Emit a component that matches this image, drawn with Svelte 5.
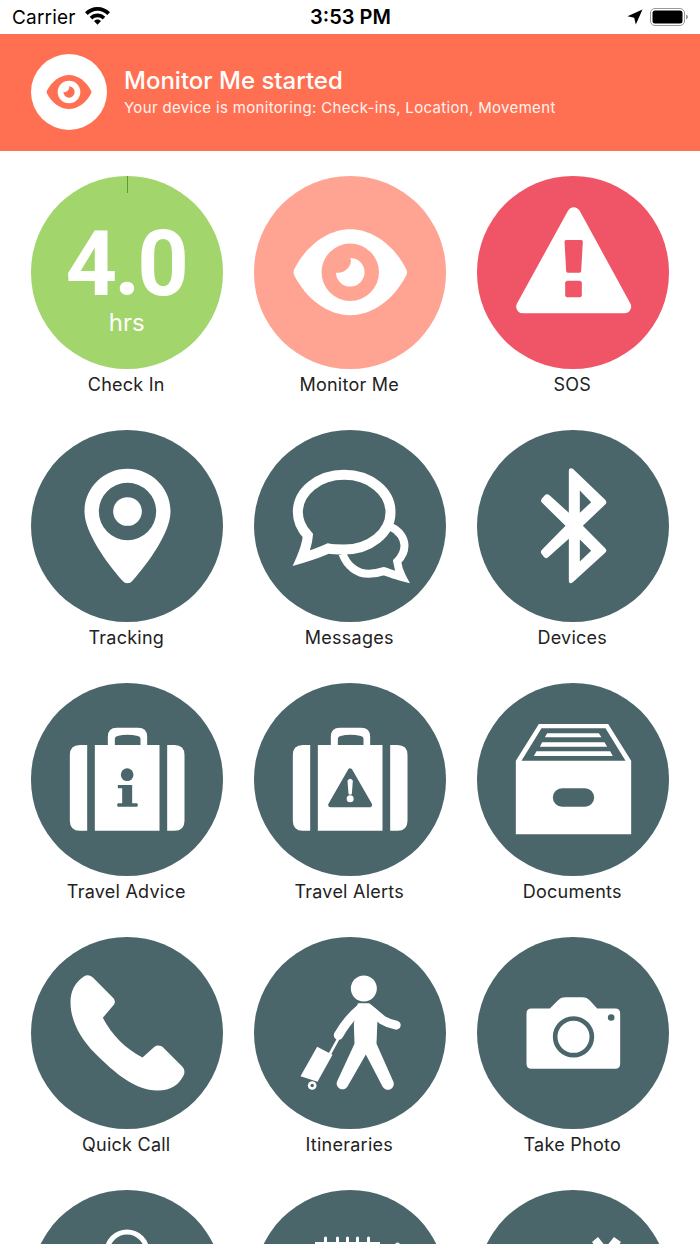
<script>
    const items = [
        { label: 'Check In', tone: 'green', hours: '4.0' },
        { label: 'Monitor Me', tone: 'coral', icon: eyeIcon },
        { label: 'SOS', tone: 'red', icon: sosIcon },
        { label: 'Tracking', tone: 'slate', icon: pinIcon },
        { label: 'Messages', tone: 'slate', icon: messagesIcon },
        { label: 'Devices', tone: 'slate', icon: bluetoothIcon },
        { label: 'Travel Advice', tone: 'slate', icon: adviceIcon },
        { label: 'Travel Alerts', tone: 'slate', icon: alertsIcon },
        { label: 'Documents', tone: 'slate', icon: documentsIcon },
        { label: 'Quick Call', tone: 'slate', icon: phoneIcon },
        { label: 'Itineraries', tone: 'slate', icon: walkerIcon },
        { label: 'Take Photo', tone: 'slate', icon: cameraIcon },
        // last row runs off the bottom of the screen, labels never show
        { tone: 'slate', icon: ringIcon },
        { tone: 'slate', icon: calendarIcon },
        { tone: 'slate', icon: toolsIcon }
    ];
</script>

{#snippet eyeIcon(shape = '#fff', ring = 'currentColor')}
    <svg class="glyph" viewBox="-96.25 -96.25 192.5 192.5">
        <path fill={shape} d="M-56 -3C-44 -27 -22 -43 0 -43C22 -43 44 -27 56 -3Q57.5 0 56 3C44 27 22 43 0 43C-22 43 -44 27 -56 3Q-57.5 0 -56 -3Z" />
        <circle r="28.7" fill={ring} />
        <path fill={shape} d="M-14.3 0.5A14.3 14.3 0 1 0 0 -14.3C2 -10 -1 -5 -3 -3.5C-5 -1 -10 1 -14.3 0.5Z" />
    </svg>
{/snippet}

{#snippet sosIcon()}
    <svg class="glyph" viewBox="49.5 33 577.5 577.5">
        <path fill="#fff" stroke="#fff" stroke-width="40" stroke-linejoin="round" d="M340 147L492 425H187Z" />
        <path fill="currentColor" d="M317 225H362Q367 225 367 230L362 318Q362 323 357 323H322Q317 323 317 318L312 230Q312 225 317 225Z" />
        <rect x="314" y="347" width="50" height="50" rx="8" fill="currentColor" />
    </svg>
{/snippet}

{#snippet pinIcon()}
    <svg class="glyph" viewBox="31.5 13.5 577.5 577.5">
        <path fill="#fff" fill-rule="evenodd" d="M321 130C392 130 450 187 450 258C450 320 385 410 336 466C328 476 314 476 306 466C257 410 192 320 192 258C192 187 250 130 321 130ZM321 172A86 86 0 1 0 321 344A86 86 0 1 0 321 172Z" />
        <circle cx="321" cy="258" r="43" fill="#fff" />
    </svg>
{/snippet}

{#snippet messagesIcon()}
    <svg class="glyph" viewBox="700.5 13.5 577.5 577.5">
        <path fill="none" stroke="#fff" stroke-width="24" stroke-miterlimit="6" d="M1112 305C1138 316 1152 340 1152 360C1152 378 1143 395 1130 408C1132 425 1137 440 1145 455C1125 450 1108 443 1090 437C1075 442 1060 445 1045 445C1010 445 980 422 966 385" />
        <path fill="none" stroke="#fff" stroke-width="30" stroke-miterlimit="6" d="M862 330C840 306 832 285 832 260C832 198 894 148 971 148C1048 148 1110 198 1110 260C1110 322 1048 372 971 372C955 372 938 372 923 369C900 380 870 390 843 398C853 375 860 355 862 330Z" />
    </svg>
{/snippet}

{#snippet bluetoothIcon()}
    <svg class="glyph" viewBox="49.5 13.5 577.5 577.5">
        <path fill="#fff" fill-rule="evenodd" d="M325 138Q325 124 337 130L434 223Q441 230 434 237L367 301L434 368Q441 375 434 382L337 470Q325 478 325 464V340L262 396Q255 401 250 394L243 385Q238 378 245 372L315 301L245 232Q238 225 245 218L253 209Q260 203 267 209L325 262ZM358 195V262L392 230ZM358 342V408L392 376Z" />
    </svg>
{/snippet}

{#snippet caseBody()}
    <path fill="#fff" d="M200 195V452H178Q148 452 148 422V225Q148 195 178 195Z" />
    <path fill="#fff" d="M440 195V452H462Q492 452 492 422V225Q492 195 462 195Z" />
    <path fill="#fff" fill-rule="evenodd" d="M223 195H262V170Q262 143 289 143H353Q380 143 380 170V195H417V452H223ZM283 195H360V176Q360 170 352 168Q320 160 291 168Q283 170 283 176Z" />
{/snippet}

{#snippet adviceIcon()}
    <svg class="glyph" viewBox="31.5 9 577.5 577.5">
        {@render caseBody()}
        <circle cx="320" cy="284" r="19" fill="currentColor" />
        <path fill="currentColor" d="M292 315H335V370H349Q352 370 352 375T349 380H293Q290 380 290 375T293 370H305V325H292Z" />
    </svg>
{/snippet}

{#snippet alertsIcon()}
    <svg class="glyph" viewBox="31.5 9 577.5 577.5">
        {@render caseBody()}
        <path fill="currentColor" stroke="currentColor" stroke-width="14" stroke-linejoin="round" d="M320 272L379 375H261Z" />
        <path fill="#fff" d="M312 302Q320 290 328 302L325 342Q320 347 315 342Z" />
        <circle cx="320" cy="356" r="10.5" fill="#fff" />
    </svg>
{/snippet}

{#snippet documentsIcon()}
    <svg class="glyph" viewBox="49.5 9 577.5 577.5">
        <path fill="#fff" fill-rule="evenodd" d="M235 132H443L512 242V463H166V242ZM243 145L183 242H495L435 145Z" />
        <path fill="#fff" d="M260 160H415L423 172H253ZM245 187H432L440 200H238ZM228 214H449L457 228H220Z" />
        <rect x="277" y="325" width="124" height="55" rx="27.5" fill="currentColor" />
    </svg>
{/snippet}

{#snippet phoneIcon()}
    <svg class="glyph" viewBox="31.5 19.5 577.5 577.5">
        <path fill="#fff" d="M190 138C200 132 210 134 218 142L276 200C285 208 285 218 278 225L247 262C275 315 315 355 366 381L402 349C410 343 420 344 428 351L485 408C493 416 494 428 488 437C475 460 455 480 410 480C345 480 285 430 225 370C170 315 150 260 150 215C150 180 165 155 190 138Z" />
    </svg>
{/snippet}

{#snippet walkerIcon()}
    <svg class="glyph" viewBox="700.5 19.5 577.5 577.5">
        <circle cx="1030" cy="174" r="39" fill="#fff" />
        <path fill="#fff" d="M1012 218H1046L1072 240L1068 340L1118 452A17 17 0 0 1 1086 468L1036 372L981 468A17 17 0 0 1 951 450L1002 340L1000 280Z" />
        <path fill="none" stroke="#fff" stroke-width="27" stroke-linecap="round" stroke-linejoin="round" d="M1045 235L1085 268Q1105 280 1127 284" />
        <path fill="none" stroke="#fff" stroke-width="28" stroke-linecap="round" stroke-linejoin="round" d="M1020 234Q982 265 954 314" />
        <path fill="none" stroke="#fff" stroke-width="8" d="M953 325L925 376" />
        <path fill="#fff" d="M890 349L936 373L891 454L840 437Z" />
        <circle cx="875" cy="465" r="13" fill="#fff" />
        <circle cx="875" cy="465" r="5" fill="currentColor" />
    </svg>
{/snippet}

{#snippet cameraIcon()}
    <svg class="glyph" viewBox="49.5 19.5 577.5 577.5">
        <path fill="#fff" d="M213 234H268L292 210Q300 200 315 200H365Q380 200 388 210L410 234H464Q479 234 479 249V400Q479 415 464 415H213Q198 415 198 400V249Q198 234 213 234Z" />
        <circle cx="339" cy="319" r="55" fill="#fff" stroke="currentColor" stroke-width="14" />
        <circle cx="452" cy="261" r="10" fill="currentColor" />
    </svg>
{/snippet}

{#snippet ringIcon()}
    <svg class="glyph" viewBox="0 0 192.5 192.5">
        <circle cx="96" cy="62" r="20" fill="none" stroke="#fff" stroke-width="5" />
    </svg>
{/snippet}

{#snippet calendarIcon()}
    <svg class="glyph" viewBox="0 0 192.5 192.5">
        <path fill="#fff" d="M61 52H126V70H61Z" />
        <path stroke="#fff" stroke-width="3" stroke-linecap="round" d="M71.5 48V56M83.5 48V56M93.5 48V56M103.5 48V56M114.5 48V56" />
        <circle cx="143.5" cy="55" r="2.5" fill="#fff" />
    </svg>
{/snippet}

{#snippet toolsIcon()}
    <svg class="glyph" viewBox="0 0 192.5 192.5">
        <path fill="#fff" d="M115 52L121 47L129 57L137 47L144 52L135 64L144 76H114L123 64Z" />
    </svg>
{/snippet}

<div class="screen">
    <div class="status-bar">
        <div class="status-left">
            <span class="carrier">Carrier</span>
            <svg class="wifi" viewBox="0 0 25 18">
                <path fill="#000" d="M12.5 0C17.4 0 21.8 2 25 5.2L22.3 8C19.8 5.4 16.3 3.8 12.5 3.8S5.2 5.4 2.7 8L0 5.2C3.2 2 7.6 0 12.5 0Z" />
                <path fill="#000" d="M12.5 6.4C15.5 6.4 18.3 7.6 20.3 9.7L17.6 12.4C16.3 11.1 14.5 10.2 12.5 10.2S8.7 11.1 7.4 12.4L4.7 9.7C6.7 7.6 9.5 6.4 12.5 6.4Z" />
                <path fill="#000" d="M12.5 12.6C13.9 12.6 15.1 13.2 16 14.1L12.5 17.8L9 14.1C9.9 13.2 11.1 12.6 12.5 12.6Z" />
            </svg>
        </div>
        <div class="status-time">3:53 PM</div>
        <div class="status-right">
            <svg class="arrow" viewBox="0 0 16 16">
                <path fill="#000" d="M15.5 0.5L8.8 15.5L7.2 8.8L0.5 7.2Z" />
            </svg>
            <svg class="battery" viewBox="0 0 39 18">
                <rect x="0.5" y="0.5" width="34" height="17" rx="4.5" fill="none" stroke="#999" />
                <rect x="2.5" y="2.5" width="30" height="13" rx="2.5" fill="#000" />
                <path fill="#999" d="M36 6.5C37.2 7 38 7.9 38 9S37.2 11 36 11.5Z" />
            </svg>
        </div>
    </div>

    <div class="banner">
        <div class="banner-icon">{@render eyeIcon('#ff7052', '#fff')}</div>
        <div class="banner-text">
            <div class="banner-title">Monitor Me started</div>
            <div class="banner-sub">Your device is monitoring: Check-ins, Location, Movement</div>
        </div>
    </div>

    <div class="grid">
        {#each items as item}
            <div class="cell">
                <div class="circle {item.tone}">
                    {#if item.hours}
                        <div class="tick"></div>
                        <div class="hours">{item.hours}</div>
                        <div class="unit">hrs</div>
                    {:else}
                        {@render item.icon()}
                    {/if}
                </div>
                {#if item.label}
                    <div class="label">{item.label}</div>
                {/if}
            </div>
        {/each}
    </div>
</div>

<style>
    :global(body) {
        background: #fff;
    }

    .screen {
        width: 700px;
        height: 1244px;
        overflow: hidden;
        background: #fff;
        font-family: Inter, "Liberation Sans", sans-serif;
        color: #222;
    }

    .status-bar {
        height: 34px;
        display: grid;
        grid-template-columns: 1fr auto 1fr;
        align-items: center;
        padding: 0 11px 0 12px;
        color: #000;
    }

    .status-left {
        display: flex;
        align-items: center;
        gap: 9px;
        font-size: 19px;
    }

    .carrier {
        letter-spacing: 0.2px;
    }

    .wifi {
        width: 25px;
        height: 18px;
        margin-top: -3px;
    }

    .status-time {
        font-size: 20px;
        font-weight: 600;
    }

    .status-right {
        display: flex;
        justify-content: flex-end;
        align-items: center;
        gap: 7px;
    }

    .arrow {
        width: 16px;
        height: 16px;
    }

    .battery {
        width: 39px;
        height: 18px;
    }

    .banner {
        height: 116.5px;
        background: #ff7052;
        display: flex;
        align-items: center;
        gap: 17.5px;
        padding-left: 30.5px;
        color: #fff;
    }

    .banner-icon {
        width: 76px;
        height: 76px;
        border-radius: 50%;
        background: #fff;
    }

    .glyph {
        display: block;
        width: 100%;
        height: 100%;
    }

    .banner-text {
        display: flex;
        flex-direction: column;
        gap: 3px;
        padding-top: 1px;
    }

    .banner-title {
        font-size: 24px;
        font-weight: 500;
        line-height: 28px;
    }

    .banner-sub {
        font-size: 15px;
        line-height: 20px;
        letter-spacing: 0.33px;
        opacity: 0.92;
    }

    .grid {
        display: grid;
        grid-template-columns: repeat(3, 192.5px);
        grid-auto-rows: 253.5px;
        column-gap: 30.5px;
        padding: 25.5px 0 0 30.5px;
    }

    .cell {
        display: flex;
        flex-direction: column;
        align-items: center;
    }

    .circle {
        position: relative;
        width: 192.5px;
        height: 192.5px;
        border-radius: 50%;
        overflow: hidden;
        display: flex;
        flex-direction: column;
        align-items: center;
    }

    .green {
        background: #a2d56b;
        color: #fff;
    }

    .coral {
        background: #ffa392;
        color: #ffa392;
    }

    .red {
        background: #ef5566;
        color: #ef5566;
    }

    .slate {
        background: #4b666a;
        color: #4b666a;
    }

    .tick {
        position: absolute;
        top: 0;
        left: 96.5px;
        width: 1px;
        height: 17px;
        background: #5a9e2a;
    }

    .hours {
        margin: 50.5px 0 0 -2px;
        font-family: Roboto, sans-serif;
        font-size: 90px;
        font-weight: 700;
        line-height: 76px;
        letter-spacing: -3px;
    }

    .unit {
        margin-top: 5.5px;
        font-size: 24px;
        line-height: 30px;
    }

    .label {
        margin: 5px 0 0 -1px;
        font-size: 18px;
        line-height: 22px;
        letter-spacing: 0.25px;
        white-space: nowrap;
    }
</style>
